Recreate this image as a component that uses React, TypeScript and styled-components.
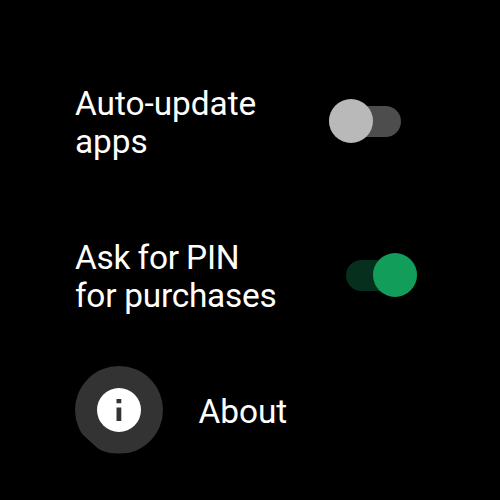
import React from "react";
import styled, { createGlobalStyle } from "styled-components";

const Global = createGlobalStyle`
  html, body { margin: 0; padding: 0; background: #000; }
`;

const Screen = styled.main`
  box-sizing: border-box;
  width: 500px;
  height: 500px;
  overflow: hidden;
  padding: 84px 83px 0 75px;
  background: #000;
  color: #fff;
  font: 400 33.4px/38px Roboto, sans-serif;
`;

const SettingRow = styled.label<{ $inset?: number }>`
  display: flex;
  justify-content: space-between;
  height: 154px;
  padding-right: ${(p) => p.$inset ?? 0}px;
`;

const Label = styled.span<{ $tracking?: number }>`
  margin-top: 1px;
  letter-spacing: ${(p) => p.$tracking ?? 0}px;
`;

const Line = styled.span<{ $wordSpacing?: number }>`
  display: block;
  word-spacing: ${(p) => p.$wordSpacing ?? 0}px;
`;

const Switch = styled.span<{ $on?: boolean }>`
  display: grid;
  align-items: center;
  justify-items: ${(p) => (p.$on ? "end" : "start")};
  width: ${(p) => (p.$on ? 71.5 : 72)}px;
  height: 44px;
  margin-top: 15px;
  &::before {
    content: "";
    grid-area: 1 / 1;
    width: 100%;
    height: 31px;
    border-radius: 15.5px;
    background: ${(p) => (p.$on ? "#06301d" : "#4d4d4d")};
  }
`;

const Thumb = styled.span<{ $on?: boolean }>`
  grid-area: 1 / 1;
  width: 44px;
  height: 44px;
  border-radius: 50%;
  background: ${(p) => (p.$on ? "#129d5a" : "#b9b9b9")};
`;

const AboutRow = styled.div`
  display: flex;
  align-items: center;
  gap: 35.4px;
  height: 88px;
  margin-top: -26.4px;
`;

const IconDisc = styled.span`
  display: grid;
  place-items: center;
  width: 88px;
  height: 88px;
  border-radius: 50%;
  background: #333;
  clip-path: polygon(0 0, 100% 0, 100% 100%, 24px 100%, 24px 84px, 6px 67.5px, 0 67.5px);
`;

const AboutLabel = styled(Label)`
  margin-top: 4px;
`;

export default function App() {
  return (
    <>
      <Global />
      <Screen>
        <SettingRow $inset={16}>
          <Label $tracking={-0.04}>
            <Line>Auto-update</Line>
            <Line>apps</Line>
          </Label>
          <Switch><Thumb /></Switch>
        </SettingRow>
        <SettingRow>
          <Label $tracking={-0.25}>
            <Line $wordSpacing={-0.7}>Ask for PIN</Line>
            <Line>for purchases</Line>
          </Label>
          <Switch $on><Thumb $on /></Switch>
        </SettingRow>
        <AboutRow>
          <IconDisc>
            <svg width="44" height="44" viewBox="0 0 44 44">
              <circle cx="22" cy="22" r="22" fill="#fff" />
              <path d="M19.5 11h4.8v4.2h-4.8zM19.5 19.4h4.8v13.6h-4.8z" fill="#333" />
            </svg>
          </IconDisc>
          <AboutLabel>About</AboutLabel>
        </AboutRow>
      </Screen>
    </>
  );
}
